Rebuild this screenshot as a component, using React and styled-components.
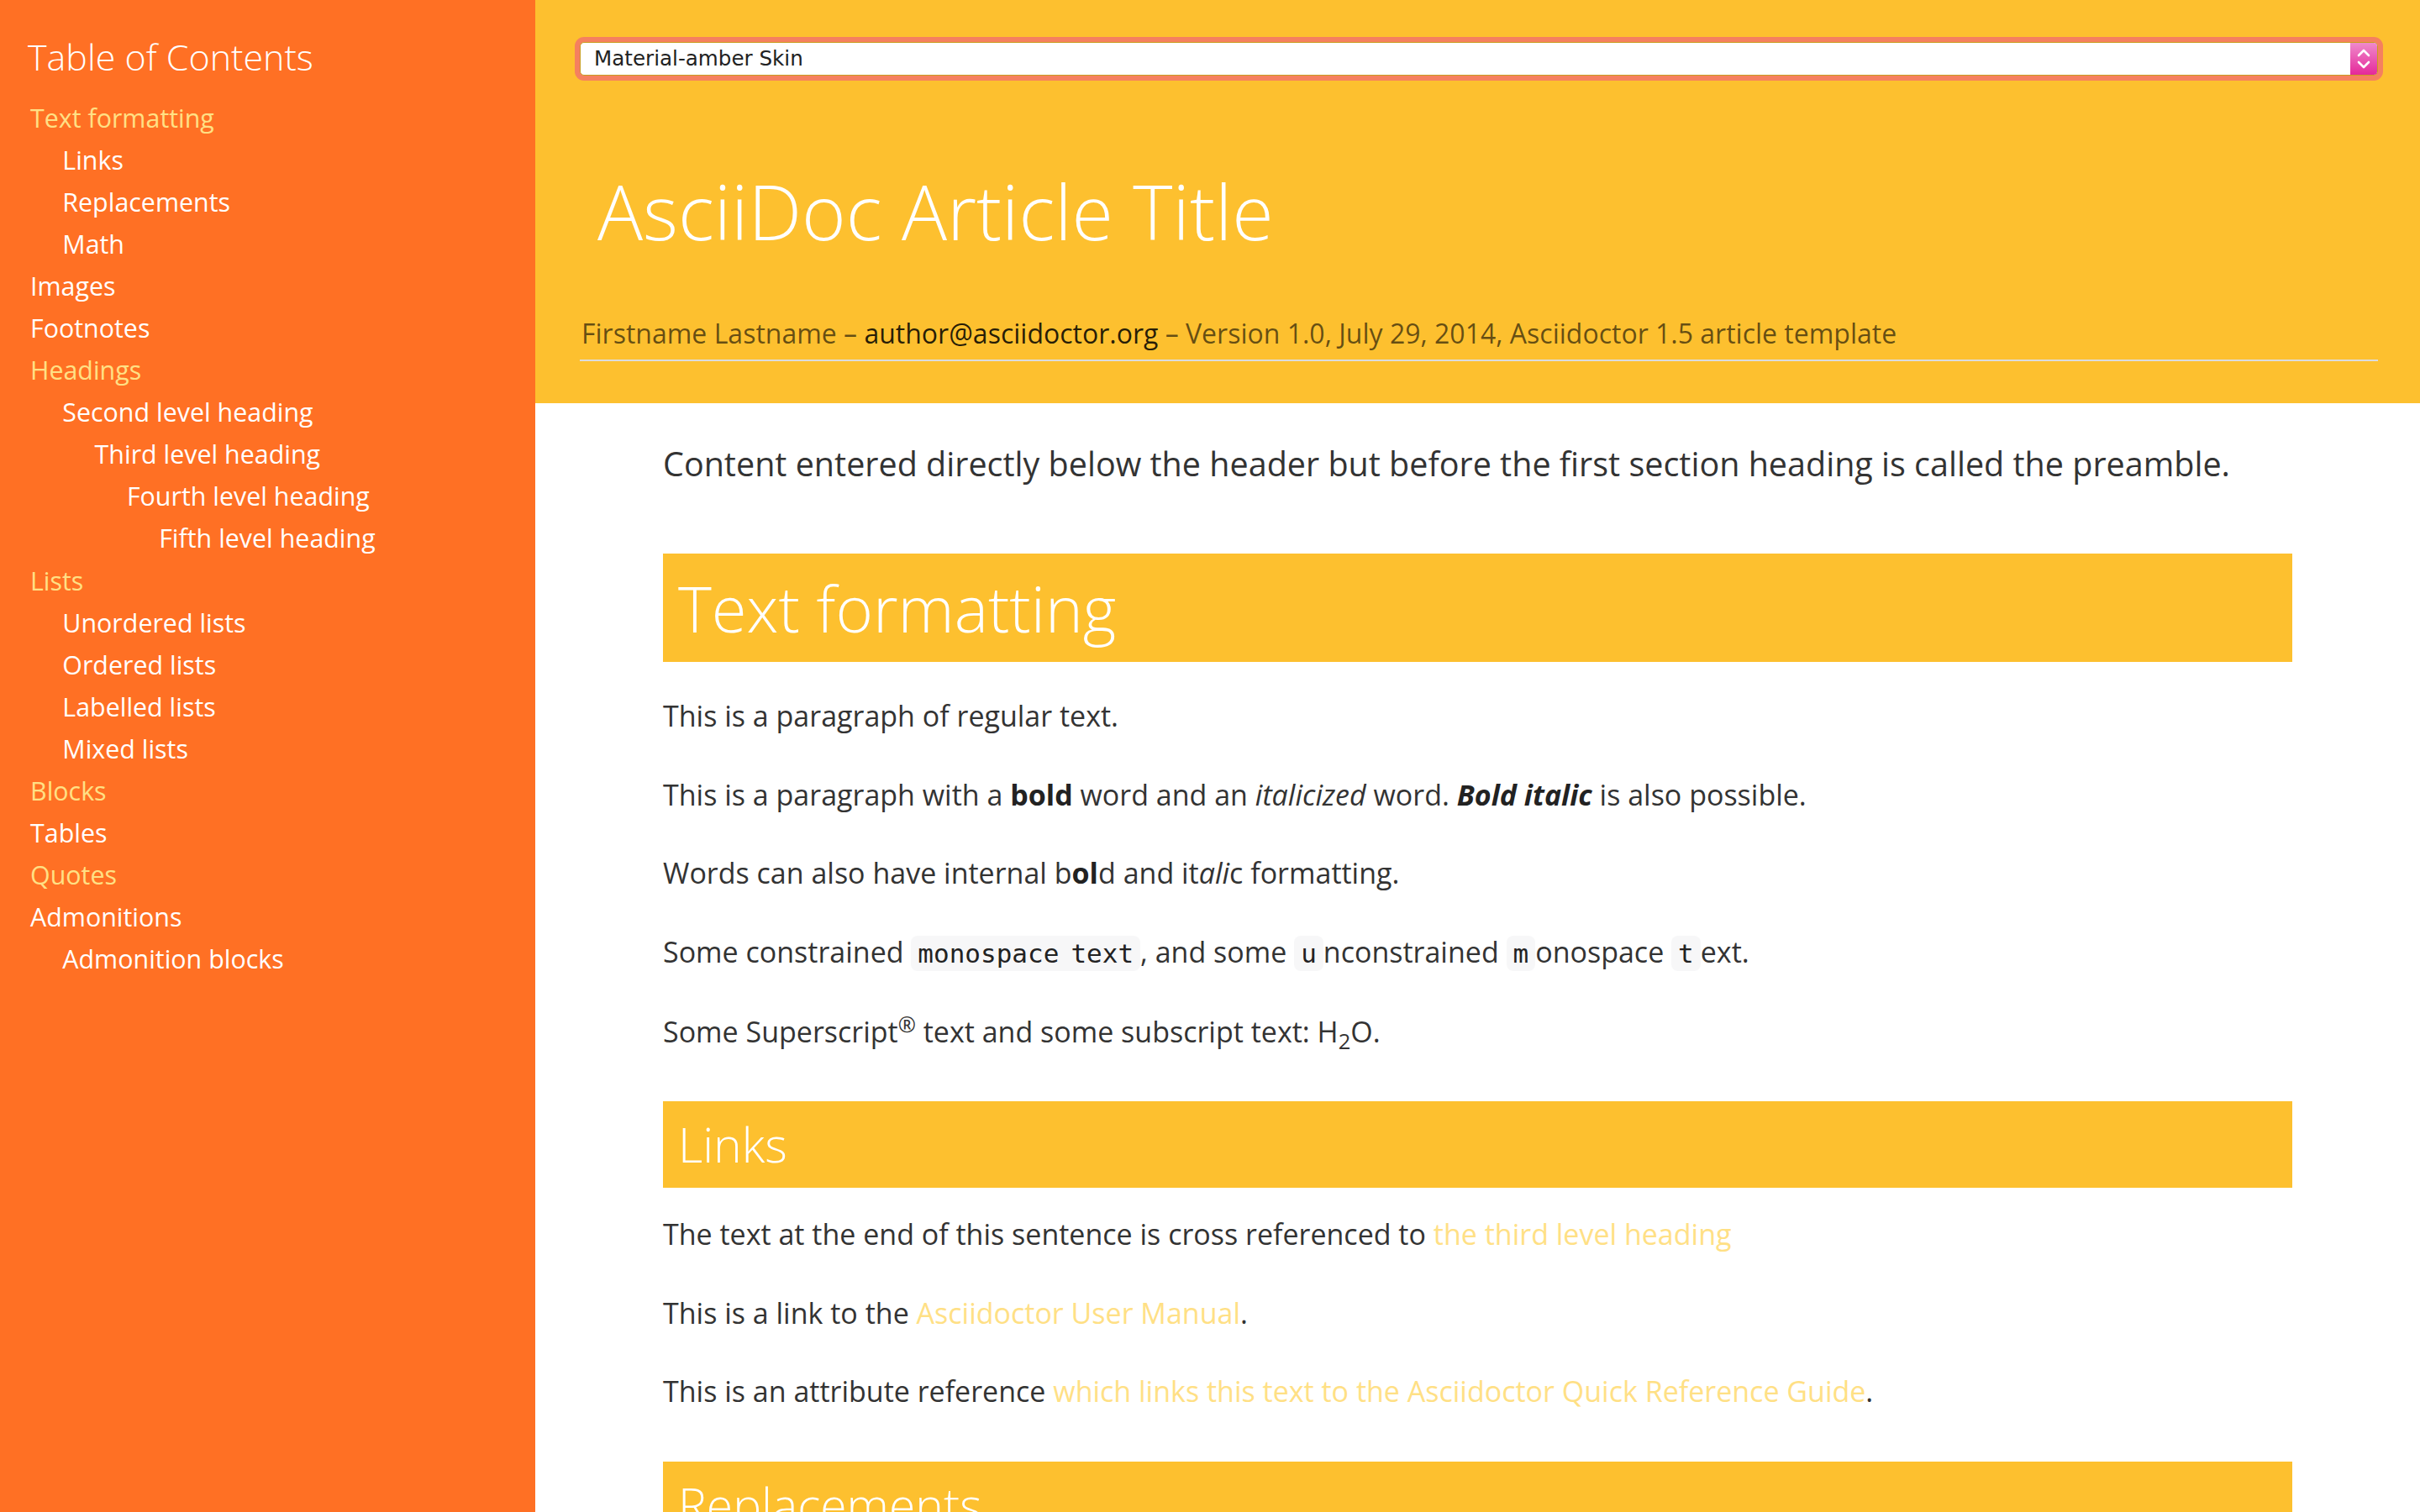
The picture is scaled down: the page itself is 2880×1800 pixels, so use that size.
import styled, { createGlobalStyle } from 'styled-components';

const GlobalStyle = createGlobalStyle`
  html, body {
    margin: 0;
    padding: 0;
  }
  body {
    font-family: "Open Sans", "Noto Sans", "DejaVu Sans", sans-serif;
    color: #333;
    background: #fff;
  }
  * {
    box-sizing: border-box;
  }
`;

const AMBER = '#fdc02f';
const ORANGE = '#ff7024';
const LIGHT_LINK = '#ffe085';

const Page = styled.div`
  display: flex;
  height: 100vh;
  overflow: hidden;
`;

const Sidebar = styled.nav`
  flex: 0 0 637px;
  background: ${ORANGE};
  padding: 41px 0 0 36px;
`;

const TocTitle = styled.div`
  margin: 0 0 27px -3px;
  font-size: 43px;
  line-height: 53px;
  font-weight: 300;
  color: #fff;
`;

const TocList = styled.ul`
  list-style: none;
  margin: 0;
  padding: 0;
  font-size: 30.4px;
`;

const TocItem = styled.li`
  margin-top: 10px;
  line-height: 40.05px;
  padding-left: ${(p) => (p.$level - 1) * 38.3}px;
  color: ${(p) => (p.$active ? LIGHT_LINK : '#fff')};
  white-space: nowrap;
`;

const Main = styled.main`
  flex: 1;
  min-width: 0;
`;

const Header = styled.header`
  background: ${AMBER};
  padding: 50px 50px 50px 53px;
`;

const SkinSelect = styled.div`
  display: flex;
  height: 40px;
  background: #fff;
  border: 1px solid #c99d1f;
  border-radius: 5px;
  box-shadow: 0 0 0 6px #f5805f;
  overflow: hidden;
`;

const SelectText = styled.span`
  flex: 1;
  padding-left: 16px;
  font-family: "DejaVu Sans", "Liberation Sans", sans-serif;
  font-size: 24.6px;
  line-height: 38px;
  color: #222;
`;

const Stepper = styled.span`
  flex: 0 0 32px;
  display: flex;
  align-items: center;
  justify-content: center;
  background: linear-gradient(#ef8acb, #e5289a);
`;

const Title = styled.h1`
  margin: 107px 0 0;
  padding-left: 21px;
  font-size: 90px;
  line-height: 108px;
  font-weight: 300;
  color: #fff;
`;

const Details = styled.div`
  margin-top: 61px;
  padding: 8px 0 8px 2px;
  font-size: 32px;
  line-height: 1.45;
  color: rgba(0, 0, 0, 0.6);
  border-bottom: 2px solid #dcdcdc;
  white-space: nowrap;
`;

const Email = styled.span`
  color: rgba(0, 0, 0, 0.85);
`;

const Content = styled.div`
  max-width: 1939px;
  margin: 0 auto;
  padding-top: 41px;
`;

const Lead = styled.p`
  margin: 0;
  font-size: 39.5px;
  line-height: 62px;
  color: #333;
`;

const SectionTitle = styled.h2`
  margin: ${(p) => p.$top}px 0 ${(p) => p.$bottom}px;
  padding: 0 18px;
  background: ${AMBER};
  color: #fff;
  font-weight: 300;
  font-size: ${(p) => p.$size}px;
  line-height: ${(p) => p.$height}px;
`;

const Paragraph = styled.p`
  margin: 0 0 39px;
  font-size: 34px;
  line-height: 54.4px;
  color: #333;
`;

const Strong = styled.strong`
  font-weight: 700;
  color: #222;
`;

const Code = styled.code`
  font-family: "DejaVu Sans Mono", "Liberation Mono", monospace;
  font-size: 31px;
  padding: 3px 8px;
  word-spacing: -4.6px;
  background: #f7f7f8;
  border-radius: 8px;
  color: #222;
`;

const Sup = styled.sup`
  font-size: 75%;
  line-height: 0;
  vertical-align: super;
`;

const Sub = styled.sub`
  font-size: 75%;
  line-height: 0;
  vertical-align: sub;
`;

const Link = styled.a`
  color: ${LIGHT_LINK};
  text-decoration: none;
`;

const tocItems = [
  { label: 'Text formatting', level: 1, active: true },
  { label: 'Links', level: 2 },
  { label: 'Replacements', level: 2 },
  { label: 'Math', level: 2 },
  { label: 'Images', level: 1 },
  { label: 'Footnotes', level: 1 },
  { label: 'Headings', level: 1, active: true },
  { label: 'Second level heading', level: 2 },
  { label: 'Third level heading', level: 3 },
  { label: 'Fourth level heading', level: 4 },
  { label: 'Fifth level heading', level: 5 },
  { label: 'Lists', level: 1, active: true },
  { label: 'Unordered lists', level: 2 },
  { label: 'Ordered lists', level: 2 },
  { label: 'Labelled lists', level: 2 },
  { label: 'Mixed lists', level: 2 },
  { label: 'Blocks', level: 1, active: true },
  { label: 'Tables', level: 1 },
  { label: 'Quotes', level: 1, active: true },
  { label: 'Admonitions', level: 1 },
  { label: 'Admonition blocks', level: 2 },
];

function Chevrons() {
  return (
    <svg width="16" height="26" viewBox="0 0 16 26" fill="none">
      <path d="M2 9 L8 3 L14 9" stroke="#fff" strokeWidth="2.6" strokeLinecap="round" strokeLinejoin="round" />
      <path d="M2 17 L8 23 L14 17" stroke="#fff" strokeWidth="2.6" strokeLinecap="round" strokeLinejoin="round" />
    </svg>
  );
}

export default function App() {
  return (
    <Page>
      <GlobalStyle />
      <Sidebar>
        <TocTitle>Table of Contents</TocTitle>
        <TocList>
          {tocItems.map((item) => (
            <TocItem key={item.label} $level={item.level} $active={item.active}>
              {item.label}
            </TocItem>
          ))}
        </TocList>
      </Sidebar>

      <Main>
        <Header>
          <SkinSelect>
            <SelectText>Material-amber Skin</SelectText>
            <Stepper>
              <Chevrons />
            </Stepper>
          </SkinSelect>
          <Title>AsciiDoc Article Title</Title>
          <Details>
            Firstname Lastname&nbsp;–&nbsp;<Email>author@asciidoctor.org</Email>&nbsp;–&nbsp;Version 1.0, July 29, 2014, Asciidoctor 1.5 article template
          </Details>
        </Header>

        <Content>
          <Lead>
            Content entered directly below the header but before the first section heading is called the preamble.
          </Lead>

          <SectionTitle $top={76} $bottom={37} $size={76} $height={129}>
            Text formatting
          </SectionTitle>
          <Paragraph>This is a paragraph of regular text.</Paragraph>
          <Paragraph>
            This is a paragraph with a <Strong>bold</Strong> word and an <em>italicized</em> word.{' '}
            <Strong>
              <em>Bold italic</em>
            </Strong>{' '}
            is also possible.
          </Paragraph>
          <Paragraph>
            Words can also have internal b<Strong>ol</Strong>d and it<em>ali</em>c formatting.
          </Paragraph>
          <Paragraph>
            Some constrained <Code>monospace text</Code>, and some <Code>u</Code>nconstrained{' '}
            <Code>m</Code>onospace <Code>t</Code>ext.
          </Paragraph>
          <Paragraph>
            Some Superscript<Sup>®</Sup> text and some subscript text: H<Sub>2</Sub>O.
          </Paragraph>

          <SectionTitle as="h3" $top={56} $bottom={28} $size={57} $height={103}>
            Links
          </SectionTitle>
          <Paragraph>
            The text at the end of this sentence is cross referenced to <Link>the third level heading</Link>
          </Paragraph>
          <Paragraph>
            This is a link to the <Link>Asciidoctor User Manual</Link>.
          </Paragraph>
          <Paragraph>
            This is an attribute reference{' '}
            <Link>which links this text to the Asciidoctor Quick Reference Guide</Link>.
          </Paragraph>

          <SectionTitle as="h3" $top={56} $bottom={28} $size={57} $height={103}>
            Replacements
          </SectionTitle>
          <Paragraph>
            The following replacements are supported: (C) copyright, (R) registered, (TM) trademark.
          </Paragraph>
        </Content>
      </Main>
    </Page>
  );
}
